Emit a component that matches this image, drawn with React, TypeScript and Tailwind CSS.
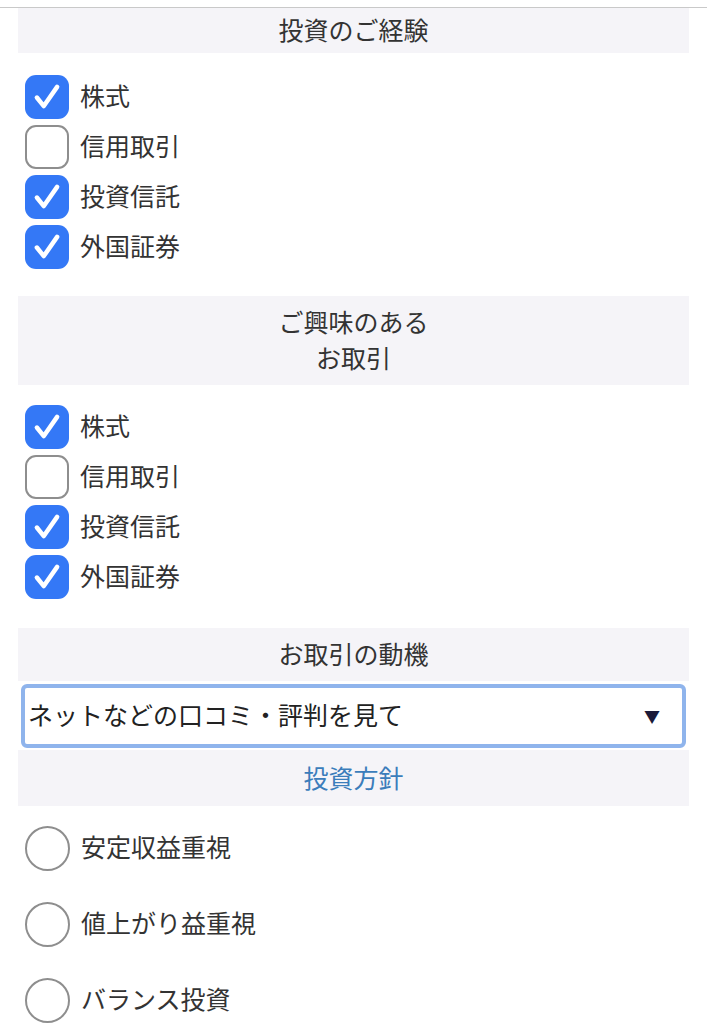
const font = "font-['Hiragino_Sans','Noto_Sans_CJK_JP',sans-serif]";

type Opt = { label: string; checked: boolean };

const trades: Opt[] = [
	{ label: '株式', checked: true },
	{ label: '信用取引', checked: false },
	{ label: '投資信託', checked: true },
	{ label: '外国証券', checked: true },
];

function Heading({ lines, blue, h }: { lines: string[]; blue?: boolean; h: string }) {
	return (
		<div
			className={`mx-[18px] bg-[#f5f4f8] flex flex-col items-center justify-center pb-[3px] text-[25px] leading-[36px] ${
				blue ? 'text-[#3b7dbb]' : 'text-[#333]'
			} ${h}`}
		>
			{lines.map((l) => (
				<span key={l}>{l}</span>
			))}
		</div>
	);
}

function Check({ checked }: { checked: boolean }) {
	if (!checked) {
		return (
			<span className="w-[44px] h-[44px] rounded-[11px] border-[2.5px] border-[#8e8e8e] bg-white shrink-0" />
		);
	}
	return (
		<span className="w-[44px] h-[44px] rounded-[11px] bg-[#3478f6] shrink-0 flex items-center justify-center">
			<svg width="32" height="32" viewBox="0 0 30 30" fill="none">
				<path
					d="M5.5 15.5 L12 23.5 L24.5 5.5"
					stroke="white"
					strokeWidth="4.2"
					strokeLinecap="round"
					strokeLinejoin="round"
				/>
			</svg>
		</span>
	);
}

function CheckList({ items }: { items: Opt[] }) {
	return (
		<div className="flex flex-col gap-[6px] pl-[25px]">
			{items.map((o) => (
				<label key={o.label} className="flex items-center gap-[11px] h-[44px]">
					<Check checked={o.checked} />
					<span className="text-[25px] text-[#333] pb-[2px]">{o.label}</span>
				</label>
			))}
		</div>
	);
}

function Radio({ label }: { label: string }) {
	return (
		<label className="flex items-center gap-[11px] h-[46px]">
			<span className="w-[45px] h-[45px] rounded-full border-[2.5px] border-[#8e8e8e] shrink-0" />
			<span className="text-[25px] text-[#333] pb-[2px]">{label}</span>
		</label>
	);
}

export default function App() {
	return (
		<div className={`w-[707px] h-[1024px] overflow-hidden bg-white ${font}`}>
			<div className="h-[8px] border-b border-[#c9c9c9] bg-white" />
			<Heading lines={['投資のご経験']} h="h-[45px]" />
			<div className="pt-[22px] pb-[27px]">
				<CheckList items={trades} />
			</div>
			<Heading lines={['ご興味のある', 'お取引']} h="h-[89px]" />
			<div className="pt-[20px] pb-[29px]">
				<CheckList items={trades} />
			</div>
			<Heading lines={['お取引の動機']} h="h-[53px]" />
			<div className="px-[21px] pt-[3px]">
				<div className="h-[64px] border-[4px] border-[#8fb4ec] rounded-[6px] bg-white flex items-center justify-between pl-[3px] pr-[22px]">
					<span className="text-[25px] text-[#222] pb-[2px]">ネットなどの口コミ・評判を見て</span>
					<span className="text-[16px] text-[#1a1a3a]">▼</span>
				</div>
			</div>
			<div className="pt-[2px]">
				<Heading lines={['投資方針']} blue h="h-[56px]" />
			</div>
			<div className="flex flex-col gap-[30px] pl-[25px] pt-[19px]">
				<Radio label="安定収益重視" />
				<Radio label="値上がり益重視" />
				<Radio label="バランス投資" />
			</div>
		</div>
	);
}
